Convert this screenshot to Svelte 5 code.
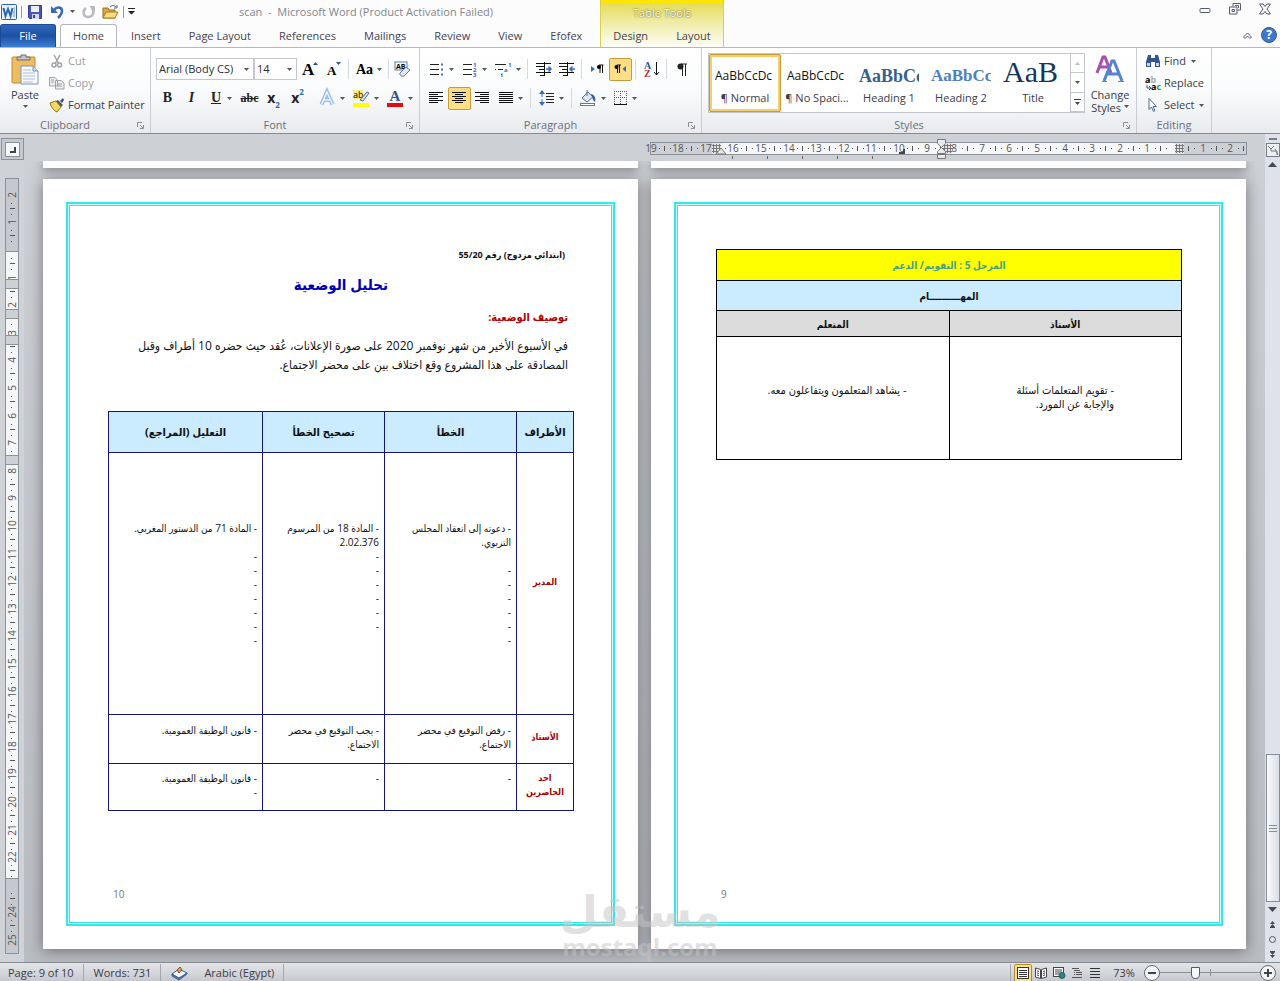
<script lang="ts">
let fontName: string = 'Arial (Body CS)';
let fontSize: string = '14';
let zoom: number = 34;

const tabs = ['Insert', 'Page Layout', 'References', 'Mailings', 'Review', 'View', 'Efofex'];

const styles = [
    { sample: 'AaBbCcDc', name: '¶ Normal', kind: 'body' },
    { sample: 'AaBbCcDc', name: '¶ No Spaci...', kind: 'body' },
    { sample: 'AaBbCc', name: 'Heading 1', kind: 'h1' },
    { sample: 'AaBbCc', name: 'Heading 2', kind: 'h2' },
    { sample: 'AaB', name: 'Title', kind: 'title' }
];

// one centimetre on the rulers at the current zoom
const CM = 27.6;

const hMarks = [];
for (let n = 19; n >= -2; n--) {
    const x = Math.round(525 - n * CM);
    hMarks.push({ x, label: n === 0 ? '' : String(Math.abs(n)) });
}

const vMarks = [];
for (let n = -2; n <= 25; n++) {
    const y = Math.round(72 + n * CM);
    vMarks.push({ y, label: n === 0 || n === 23 ? '' : String(Math.abs(n)) });
}

const rows = [
    {
        who: 'المدير',
        kind: 'tall',
        cells: [
            ['- دعوته إلى انعقاد المجلس', 'التربوي.', '', '-', '-', '-', '-', '-', '-'],
            ['- المادة 18 من المرسوم', '2.02.376', '-', '-', '-', '-', '-', '-'],
            ['- المادة 71 من الدستور المغربي.', '', '-', '-', '-', '-', '-', '-', '-']
        ]
    },
    {
        who: 'الأستاذ',
        kind: 'mid',
        cells: [
            ['- رفض التوقيع في محضر', 'الاجتماع.'],
            ['- يجب التوقيع في محضر', 'الاجتماع.'],
            ['- قانون الوظيفة العمومية.']
        ]
    },
    {
        who: 'احد الحاضرين',
        kind: 'low',
        cells: [['-'], ['-'], ['- قانون الوظيفة العمومية.', '-']]
    }
];
</script>

{#snippet caret()}
    <svg class="caret" width="5" height="3" viewBox="0 0 5 3"><path d="M0 0h5L2.500 3z" fill="#555"/></svg>
{/snippet}

{#snippet lines(list)}
    <svg width="15" height="14" viewBox="0 0 15 14">
        {#each list as [x, w], i}
            <rect {x} y={1 + i * 2} width={w} height="1" fill="#111"/>
        {/each}
    </svg>
{/snippet}

{#snippet launcher()}
    <button class="launcher" aria-label="More options">
        <svg width="7" height="7" viewBox="0 0 7 7" fill="none" stroke="#8a8f96"><path d="M.5 5V.5H5M3 3l3 3M6.5 3v3.500H3"/></svg>
    </button>
{/snippet}

<div class="app">
    <header>
        <div class="head-left">
            <div class="title-row">
                <svg class="logo" width="16" height="16" viewBox="0 0 16 16">
                    <rect x=".5" y=".5" width="15" height="15" rx="1" fill="#e9f2fb" stroke="#2c5f9e"/>
                    <path d="M2.500 4l2 8L7 5l2.500 7 2-8" fill="none" stroke="#2b66b1" stroke-width="2"/>
                    <path d="M13 4h1M13 6h1M12 8h2M12 10h2M12 12h2" stroke="#5b8dc8"/>
                </svg>
                <span class="bar"></span>
                <button class="quick" aria-label="Save">
                    <svg width="14" height="14" viewBox="0 0 14 14"><path d="M.5.5h13v13h-12l-1-1z" fill="#4a55b8" stroke="#333c96"/><path d="M3 1h8v6H3z" fill="#edf0fb"/><path d="M4 9h7v5H4z" fill="#d4d8ef"/><path d="M5 10h2v3H5z" fill="#333c96"/></svg>
                </button>
                <button class="quick" aria-label="Undo">
                    <svg width="13" height="14" viewBox="0 0 13 14"><path d="M3 5c3-4 8-3 8 1 0 3-2 5-4 7" fill="none" stroke="#3668b8" stroke-width="2.500"/><path d="M0 1v7h7z" fill="#3668b8"/></svg>
                </button>
                {@render caret()}
                <button class="quick" aria-label="Redo">
                    <svg width="13" height="14" viewBox="0 0 13 14"><path d="M4 3c-4 3-3 9 2 9 5 0 7-5 4-9" fill="none" stroke="#b9bbbf" stroke-width="2.500"/><path d="M7 1h6v6z" fill="#b9bbbf"/></svg>
                </button>
                <button class="quick" aria-label="Open">
                    <svg width="17" height="15" viewBox="0 0 17 15"><path d="M1 14V4h5l1 2h6v8z" fill="#e0a83c" stroke="#9a6d18"/><path d="M1 14l3-6h12l-3 6z" fill="#f9dc82" stroke="#a87a20"/><path d="M8 3c2-2 4-2 6 0m1-2v3h-3" fill="none" stroke="#3c5f8f"/></svg>
                </button>
                <span class="bar"></span>
                <svg width="7" height="7" viewBox="0 0 7 7"><path d="M0 0h7v1H0zM0 3h7L3.500 6.500z" fill="#222"/></svg>
                <span class="doc-title">scan&nbsp; -&nbsp; Microsoft Word (Product Activation Failed)</span>
            </div>
            <nav class="tabs">
                <button class="file">File</button>
                <button class="tab active">Home</button>
                {#each tabs as tab}
                    <button class="tab">{tab}</button>
                {/each}
            </nav>
        </div>
        <div class="context">
            <span class="context-title">Table Tools</span>
            <div class="context-tabs">
                <button class="tab">Design</button>
                <button class="tab">Layout</button>
            </div>
        </div>
        <div class="head-right">
            <div class="window-buttons">
                <button aria-label="Minimize"><svg width="12" height="12" viewBox="0 0 12 12" fill="none" stroke="#555b6e"><rect x="1" y="5.500" width="10" height="4" rx="1"/></svg></button>
                <button aria-label="Restore"><svg width="12" height="12" viewBox="0 0 12 12" fill="none" stroke="#555b6e"><path d="M4 3.500V.5h7.500V7H8.500M.5 4h7.500v7H.5zM3 6.500h2.500v2H3zM6 2.500h3.500V5"/></svg></button>
                <button aria-label="Close"><svg width="12" height="12" viewBox="0 0 12 12" fill="none" stroke="#555b6e"><path d="M.5 1h3.500l2 2.500L8 1h3.500L8 6l3.500 5H8L6 8.500 4 11H.5L4 6z"/></svg></button>
            </div>
            <div class="help-buttons">
                <button aria-label="Minimize the Ribbon"><svg width="9" height="7" viewBox="0 0 9 7" fill="none" stroke="#555b6e"><path d="M.5 5l4-4 4 4-1.500 1.500L4.500 4 2 6.500z"/></svg></button>
                <button aria-label="Help"><svg width="16" height="16" viewBox="0 0 16 16"><circle cx="8" cy="8" r="7.500" fill="#3f78c9" stroke="#2b5a9f"/><text x="8" y="12" text-anchor="middle" class="help-mark">?</text></svg></button>
            </div>
        </div>
    </header>

    <div class="ribbon">
        <section class="group clipboard">
            <div class="group-body">
                <button class="paste">
                    <svg width="28" height="31" viewBox="0 0 28 31"><rect x="1" y="3" width="23" height="26" rx="1" fill="#eebc61" stroke="#bd8a35"/><path d="M6 6V3h4V1h5v2h4v3z" fill="#bfc3c8" stroke="#6b6f75"/><path d="M10 12h12l5 5v13H10z" fill="#f9fbff" stroke="#7d93b5"/><path d="M22 12v5h5" fill="#cddcf0" stroke="#7d93b5"/><path d="M12 16h8M12 19h12M12 22h12M12 25h12M12 28h10" stroke="#a9bbd6"/></svg>
                    <span>Paste</span>
                    {@render caret()}
                </button>
                <div class="stack">
                    <button class="text-tool off">
                        <svg width="16" height="14" viewBox="0 0 16 14" fill="none" stroke="#a0a2a6" stroke-width="1.500"><path d="M5 1l4.500 8M11 1L6.500 9"/><circle cx="5" cy="11" r="2"/><circle cx="10.500" cy="11" r="2"/></svg>
                        Cut
                    </button>
                    <button class="text-tool off">
                        <svg width="16" height="14" viewBox="0 0 16 14" fill="#eee" stroke="#a0a2a6"><path d="M.5 1.500H6L8.500 4v6h-8zM6.500 4.500H12L15 7v6H6.500z"/><path d="M2 4h3M2 6h3M8 8h5M8 10h5"/></svg>
                        Copy
                    </button>
                    <button class="text-tool">
                        <svg width="16" height="14" viewBox="0 0 16 14"><path d="M1 5l6-2 5 6-4 5c-3-1-6-5-7-9z" fill="#f1d95a" stroke="#8f7a1d"/><path d="M7 3l2-1 5 5-2 2z" fill="#555a63"/><path d="M11 3l3-3 1 2-2 3z" fill="#35508f"/></svg>
                        Format Painter
                    </button>
                </div>
            </div>
            <footer><span>Clipboard</span>{@render launcher()}</footer>
        </section>

        <section class="group font">
            <div class="group-body rows">
                <div class="tools">
                    <div class="combos">
                        <label class="combo name">
                            <select bind:value={fontName} aria-label="Font"><option>Arial (Body CS)</option><option>Tahoma</option></select>
                            {@render caret()}
                        </label>
                        <label class="combo size">
                            <select bind:value={fontSize} aria-label="Font size"><option>12</option><option>14</option><option>16</option></select>
                            {@render caret()}
                        </label>
                    </div>
                    <button class="tool" aria-label="Grow font"><svg width="16" height="16" viewBox="0 0 16 16"><text x="0" y="14" class="serif" font-size="17">A</text><path d="M11 4h5l-2.500-3z" fill="#34557f"/></svg></button>
                    <button class="tool" aria-label="Shrink font"><svg width="16" height="16" viewBox="0 0 16 16"><text x="1" y="14" class="serif" font-size="13">A</text><path d="M10 1h5l-2.500 3z" fill="#34557f"/></svg></button>
                    <span class="sep"></span>
                    <button class="tool split" aria-label="Change case"><svg width="18" height="16" viewBox="0 0 18 16"><text x="1" y="13" class="serif" font-size="14">Aa</text></svg>{@render caret()}</button>
                    <span class="sep"></span>
                    <button class="tool" aria-label="Clear formatting"><svg width="17" height="16" viewBox="0 0 17 16"><rect x="1" y="1" width="12" height="8" fill="#fff" stroke="#5a7ba8"/><text x="2" y="8" font-size="7" font-weight="700">AB</text><path d="M6 12l6-6 4 3-6 6c-2 1-5-1-4-3z" fill="#dfe6f2" stroke="#63779b"/></svg></button>
                </div>
                <div class="tools">
                    <button class="tool b">B</button>
                    <button class="tool i">I</button>
                    <button class="tool split u"><span>U</span>{@render caret()}</button>
                    <button class="tool strike">abc</button>
                    <button class="tool x">x<sub>2</sub></button>
                    <button class="tool x">x<sup>2</sup></button>
                    <span class="sep"></span>
                    <button class="tool split" aria-label="Text effects"><svg width="17" height="17" viewBox="0 0 17 17"><path d="M2.500 14.500L8 2l5.500 12.500M5 10h6" fill="none" stroke="#8fbbe8" stroke-width="4"/><path d="M2.500 14.500L8 2l5.500 12.500M5 10h6" fill="none" stroke="#eef6ff" stroke-width="1.500"/></svg>{@render caret()}</button>
                    <button class="tool split" aria-label="Highlight"><svg width="17" height="17" viewBox="0 0 17 17"><rect width="10" height="9" fill="#f4ee7c"/><text x="0" y="8" font-size="9">ab</text><path d="M7 10l7-8 2 1-6 8z" fill="#dde6f2" stroke="#4f678d"/><rect y="13" width="16" height="4" fill="#ff0"/></svg>{@render caret()}</button>
                    <button class="tool split" aria-label="Font color"><svg width="17" height="17" viewBox="0 0 17 17"><text x="8" y="11" text-anchor="middle" class="serif blue" font-size="15">A</text><rect y="13" width="16" height="4" fill="#e30b0b"/></svg>{@render caret()}</button>
                </div>
            </div>
            <footer><span>Font</span>{@render launcher()}</footer>
        </section>

        <section class="group paragraph">
            <div class="group-body rows">
                <div class="tools">
                    <button class="tool split" aria-label="Bullets"><svg width="15" height="14" viewBox="0 0 15 14"><path d="M0 2.500h9M0 7.500h9M0 12.500h9" stroke="#222"/><path d="M11 1.500h2v2h-2zM11 6.500h2v2h-2zM11 11.500h2v2h-2z" fill="#4a6ea9"/></svg>{@render caret()}</button>
                    <button class="tool split" aria-label="Numbering"><svg width="15" height="15" viewBox="0 0 15 15"><path d="M0 2.500h9M0 7.500h9M0 12.500h9" stroke="#222"/><g class="tiny"><text x="10" y="5">1</text><text x="10" y="10">2</text><text x="10" y="15">3</text></g></svg>{@render caret()}</button>
                    <button class="tool split" aria-label="Multilevel list"><svg width="17" height="15" viewBox="0 0 17 15"><path d="M0 2.500h11M3 7.500h5M6 12.500h1M0 7.500h1" stroke="#222"/><g class="tiny"><text x="13" y="5">1</text><text x="9" y="10">a</text><text x="6" y="15">i</text></g></svg>{@render caret()}</button>
                    <span class="sep"></span>
                    <button class="tool" aria-label="Decrease indent"><svg width="16" height="14" viewBox="0 0 16 14"><path d="M0 1.500h15M0 4.500h8M3 7.500h5M0 10.500h15M4 13.500h4M8.500 0v14" stroke="#111"/><path d="M10 7h5M12.500 4.500L15 7l-2.500 2.500" fill="none" stroke="#3668b8" stroke-width="1.500"/></svg></button>
                    <button class="tool" aria-label="Increase indent"><svg width="16" height="14" viewBox="0 0 16 14"><path d="M0 1.500h15M0 4.500h8M3 7.500h5M0 10.500h15M4 13.500h4M8.500 0v14" stroke="#111"/><path d="M16 7h-5M13.500 4.500L11 7l2.500 2.500" fill="none" stroke="#3668b8" stroke-width="1.500"/></svg></button>
                    <span class="sep"></span>
                    <button class="tool" aria-label="Left to right"><svg width="13" height="12" viewBox="0 0 13 12"><path d="M0 3l4 3-4 3z" fill="#3668b8"/><path d="M12.500 2H8M9 2v8M11.500 2v8" fill="none" stroke="#111"/><circle cx="8" cy="4" r="2"/></svg></button>
                    <button class="tool on" aria-label="Right to left"><svg width="13" height="12" viewBox="0 0 13 12"><path d="M12 3L8.500 6 12 9z" fill="#3668b8"/><path d="M7 2H3M5.500 2v8M3.500 2v8" fill="none" stroke="#111"/><circle cx="2.500" cy="4" r="2"/></svg></button>
                    <span class="sep"></span>
                    <button class="tool" aria-label="Sort"><svg width="16" height="16" viewBox="0 0 16 16"><text x="0" y="8" class="serif blue" font-size="10">A</text><text x="0" y="16" class="serif red" font-size="10">Z</text><path d="M12.500 1v13M10 11l2.500 3 2.500-3" fill="none" stroke="#111"/></svg></button>
                    <span class="sep"></span>
                    <button class="tool" aria-label="Show marks"><svg width="11" height="13" viewBox="0 0 11 13"><path d="M4 1h6M5.500 1v12M8.500 1v12" stroke="#222" fill="none"/><circle cx="3.500" cy="3.500" r="3" fill="#222"/></svg></button>
                </div>
                <div class="tools">
                    <button class="tool" aria-label="Align left">{@render lines([[0, 14], [0, 9], [0, 14], [0, 9], [0, 14], [0, 9]])}</button>
                    <button class="tool on" aria-label="Center">{@render lines([[0, 14], [3, 8], [0, 14], [3, 8], [0, 14], [3, 8]])}</button>
                    <button class="tool" aria-label="Align right">{@render lines([[0, 14], [5, 9], [0, 14], [5, 9], [0, 14], [5, 9]])}</button>
                    <button class="tool split" aria-label="Justify">{@render lines([[0, 14], [0, 14], [0, 14], [0, 14], [0, 14], [0, 14]])}{@render caret()}</button>
                    <span class="sep"></span>
                    <button class="tool split" aria-label="Line spacing"><svg width="16" height="16" viewBox="0 0 16 16"><path d="M7 3.500h8M7 6.500h8M7 9.500h8M7 12.500h8" stroke="#222"/><path d="M3 2v12" stroke="#3668b8" stroke-dasharray="5 2"/><path d="M0 4l3-4 3 4zM0 12l3 4 3-4z" fill="#3668b8"/></svg>{@render caret()}</button>
                    <span class="sep"></span>
                    <button class="tool split" aria-label="Shading"><svg width="17" height="16" viewBox="0 0 17 16"><path d="M2 8l6-6 5 5-6 5z" fill="#dfe8f4" stroke="#4b6a99"/><path d="M7 0v6" stroke="#4b6a99"/><path d="M11 4c4 1 5 4 4 8-2-1-2-3-3-5z" fill="#35609f"/><rect x=".5" y="13.500" width="14" height="2" fill="#fff" stroke="#777"/></svg>{@render caret()}</button>
                    <button class="tool split" aria-label="Borders"><svg width="14" height="14" viewBox="0 0 14 14"><path d="M.5 0v13M6.500 0v13M12.500 0v13M0 .5h13M0 6.500h13" stroke="#555" stroke-dasharray="1 1"/><path d="M0 13.500h13" stroke="#111"/></svg>{@render caret()}</button>
                </div>
            </div>
            <footer><span>Paragraph</span>{@render launcher()}</footer>
        </section>

        <section class="group styles">
            <div class="group-body">
                <div class="gallery">
                    {#each styles as style, i}
                        <button class="style" class:chosen={i === 0}>
                            <span class="sample {style.kind}">{style.sample}</span>
                            <span class="style-name">{style.name}</span>
                        </button>
                    {/each}
                    <div class="gallery-scroll">
                        <button class="off" aria-label="Up"><svg width="5" height="3" viewBox="0 0 5 3"><path d="M0 3h5L2.500 0z" fill="#b8bbc0"/></svg></button>
                        <button aria-label="Down">{@render caret()}</button>
                        <button aria-label="More"><svg width="7" height="6" viewBox="0 0 7 6"><path d="M0 0h7v1H0zM1 3h5L3.500 6z" fill="#444"/></svg></button>
                    </div>
                </div>
                <button class="change">
                    <svg width="30" height="30" viewBox="0 0 30 30" fill="none"><path d="M2 19L8 3h2l6 16M5 13h9" stroke="#a94fb0" stroke-width="3"/><path d="M9 27l8-20h2l8 20M13 20h11" stroke="#5284cf" stroke-width="3"/><path d="M7 27.500h5M23 27.500h6" stroke="#5284cf"/></svg>
                    <span>Change</span>
                    <span>Styles {@render caret()}</span>
                </button>
            </div>
            <footer><span>Styles</span>{@render launcher()}</footer>
        </section>

        <section class="group editing">
            <div class="group-body">
                <div class="stack">
                    <button class="text-tool">
                        <svg width="16" height="14" viewBox="0 0 16 14"><path d="M3 1h3v3h4V1h3l2 7v5h-5V8H6v5H1V8z" fill="#31548f"/><path d="M2 9h3v3H2zM11 9h3v3h-3z" fill="#c4d6f0"/></svg>
                        Find {@render caret()}
                    </button>
                    <button class="text-tool">
                        <svg width="16" height="15" viewBox="0 0 16 15"><text x="0" y="7" font-size="9" font-weight="700">a<tspan fill="#aaa">b</tspan></text><text x="6" y="14" font-size="9" font-weight="700">a<tspan fill="#1a9a2a">c</tspan></text><path d="M2 9v3h3M4 10l2 2-2 2" fill="none" stroke="#35508f"/></svg>
                        Replace
                    </button>
                    <button class="text-tool">
                        <svg width="16" height="14" viewBox="0 0 16 14"><path d="M4 .5v11l2.500-2.500 2 4.500 1.500-1-2-4h3.500z" fill="#fff" stroke="#51698f"/></svg>
                        Select {@render caret()}
                    </button>
                </div>
            </div>
            <footer><span>Editing</span></footer>
        </section>
    </div>

    <main>
        <aside class="left-rail">
            <button class="tab-kind" aria-label="Tab stop"><svg width="15" height="15" viewBox="0 0 15 15"><rect x=".5" y=".5" width="14" height="14" fill="#f7f8f9" stroke="#8d9198"/><path d="M10 5v5H5" fill="none" stroke="#444" stroke-width="2"/></svg></button>
            <svg class="v-ruler" width="15" height="776" viewBox="0 0 15 776">
                <rect x=".5" y=".5" width="13" height="775" fill="#c5c8ce" stroke="#8d9198"/>
                <rect x="1" y="74" width="12" height="626" fill="#f5f6f8"/>
                {#each vMarks as mark}
                    <text transform="translate(11 {mark.y}) rotate(-90)" text-anchor="middle">{mark.label}</text>
                    {#if mark.y < 750}
                        <path d="M6 {mark.y + 8.5}h1M5 {mark.y + 13.5}h5M6 {mark.y + 19.5}h1" stroke="#555"/>
                    {/if}
                {/each}
                {#each [101, 131, 157, 277] as y}
                    <rect x=".5" y={y + .5} width="13" height="9" fill="#cdd0d5" stroke="#8d9198"/>
                {/each}
                <path d="M1 73.500h12M1 700.500h12" stroke="#8d9198"/>
            </svg>
        </aside>

        <div class="canvas">
            <div class="spread ruler-row">
                <svg class="h-ruler" width="597" height="20" viewBox="0 0 597 20">
                    <rect x=".5" y="3.500" width="596" height="12" fill="#cdd0d5" stroke="#8d9198"/>
                    <rect x="69" y="4" width="456" height="11" fill="#f5f6f8"/>
                    {#each hMarks as mark}
                        <text x={mark.x} y="13" text-anchor="middle">{mark.label}</text>
                        <path d="M{mark.x + 8} 9.500h1M{mark.x + 13.5} 7v5" stroke="#555"/>
                        {#if mark.x < 575}
                            <path d="M{mark.x + 19} 9.500h1" stroke="#555"/>
                        {/if}
                    {/each}
                    {#each [62, 293, 525] as x}
                        <rect {x} y="4" width="9" height="11" fill="#e3e5e8"/>
                        <path d="M{x} 6.500h9M{x} 9.500h9M{x} 12.500h9M{x + 1.5} 5v9M{x + 4.5} 5v9M{x + 7.5} 5v9" stroke="#777"/>
                    {/each}
                    <path d="M66 15l5-6 5 6z" fill="#e3e5e8" stroke="#777"/>
                    <path d="M287.500.5h8v4l-4 4-4-4zM287.500 14.500v-2l4-4 4 4v2zM287.500 15.500h8v4h-8z" fill="#e9eaed" stroke="#777"/>
                    <path d="M249 14h5v-4" fill="none" stroke="#444" stroke-width="2"/>
                    <path d="M82.500 17v3M117.500 17v3M152.500 17v3M187.500 17v3M222.500 17v3" stroke="#666"/>
                </svg>
            </div>
            <div class="desk">
                <div class="spread"><div class="page-end"></div><div class="page-end"></div></div>
                <div class="spread">
                    <article class="page" lang="ar">
                        <div class="frame" dir="rtl">
                            <p class="ref-line">(ابتدائي مزدوج) رقم 55/20</p>
                            <h1>تحليل الوضعية</h1>
                            <h2>توصيف الوضعية:</h2>
                            <p class="intro">في الأسبوع الأخير من شهر نوفمبر 2020 على صورة الإعلانات، عُقد حيث حضره 10 أطراف وقبل<br>المصادقة على هذا المشروع وقع اختلاف بين على محضر الاجتماع.</p>
                            <table class="analysis">
                                <thead>
                                    <tr><th class="c1">الأطراف</th><th class="c2">الخطأ</th><th class="c3">تصحيح الخطأ</th><th>التعليل (المراجع)</th></tr>
                                </thead>
                                <tbody>
                                    {#each rows as row}
                                        <tr class={row.kind}>
                                            <th>{row.who}</th>
                                            {#each row.cells as cell}
                                                <td>
                                                    {#each cell as line}
                                                        <div class="line">{line}</div>
                                                    {/each}
                                                </td>
                                            {/each}
                                        </tr>
                                    {/each}
                                </tbody>
                            </table>
                            <span class="page-number">10</span>
                        </div>
                    </article>
                    <article class="page" lang="ar">
                        <div class="frame second" dir="rtl">
                            <table class="tasks">
                                <tbody>
                                    <tr class="phase"><th colspan="2">المرحل 5 : التقويم/ الدعم</th></tr>
                                    <tr class="duty"><th colspan="2">المهــــــــــام</th></tr>
                                    <tr class="roles"><th>الأستاذ</th><th>المتعلم</th></tr>
                                    <tr class="content">
                                        <td class="wide-pad"><div class="line">- تقويم المتعلمات أسئلة</div><div class="line">والإجابة عن المورد.</div></td>
                                        <td><div class="line">- يشاهد المتعلمون ويتفاعلون معه.</div></td>
                                    </tr>
                                </tbody>
                            </table>
                            <span class="page-number">9</span>
                        </div>
                    </article>
                </div>
                <div class="watermark">
                    <span class="mark-ar">مستقل</span>
                    <span class="mark-en">mostaql.com</span>
                </div>
            </div>
        </div>

        <aside class="scrollbar">
            <span class="split-box"></span>
            <button aria-label="View ruler"><svg width="14" height="14" viewBox="0 0 14 14" fill="none" stroke="#777c85"><rect x=".5" y=".5" width="13" height="13" fill="#eceef1"/><path d="M2 3l3 3 3-3M5 6v2h6v4M9 6l3 6"/></svg></button>
            <button aria-label="Scroll up"><svg width="9" height="5" viewBox="0 0 9 5"><path d="M0 5h9L4.500 0z" fill="#444a55"/></svg></button>
            <div class="track"><div class="thumb"><i></i><i></i><i></i></div></div>
            <button aria-label="Scroll down"><svg width="9" height="5" viewBox="0 0 9 5"><path d="M0 0h9L4.500 5z" fill="#444a55"/></svg></button>
            <button aria-label="Previous page"><svg width="5" height="7" viewBox="0 0 5 7"><path d="M0 3h5L2.500 0zM0 6h5L2.500 3zM0 6h5v1H0z" fill="#444a55"/></svg></button>
            <button aria-label="Browse object"><svg width="7" height="7" viewBox="0 0 7 7"><circle cx="3.500" cy="3.500" r="3" fill="none" stroke="#555b66"/></svg></button>
            <button aria-label="Next page"><svg width="5" height="7" viewBox="0 0 5 7"><path d="M0 1h5L2.500 4zM0 4h5L2.500 7zM0 0h5v1H0z" fill="#444a55"/></svg></button>
        </aside>
    </main>

    <div class="status">
        <button class="cell">Page: 9 of 10</button>
        <button class="cell">Words: 731</button>
        <button class="cell proof">
            <svg width="17" height="14" viewBox="0 0 17 14"><path d="M1 8l7-5 8 4-8 6z" fill="#f6f7fa" stroke="#3f5f97"/><path d="M1 8v2l7 4 8-6V7l-8 5z" fill="#5279b8" stroke="#3f5f97"/><path d="M6 4l3-3 2 3-3 3z" fill="#e2a04a" stroke="#8c4b2c"/></svg>
            <span>Arabic (Egypt)</span>
        </button>
        <div class="views">
            <button class="view on" aria-label="Print layout"><svg width="12" height="12" viewBox="0 0 12 12"><rect x=".5" y=".5" width="11" height="11" fill="#fff" stroke="#333"/><path d="M2 3.500h8M2 5.500h8M2 7.500h8M2 9.500h8" stroke="#333"/></svg></button>
            <button class="view" aria-label="Full screen reading"><svg width="12" height="12" viewBox="0 0 12 12" fill="#fff" stroke="#444"><path d="M.5 1l5 1.500v9l-5-1.500zM11.500 1l-5 1.500v9l5-1.500zM2 4l2 .5M2 6l2 .5M2 8l2 .5M10 4l-2 .5M10 6l-2 .5M10 8l-2 .5"/></svg></button>
            <button class="view" aria-label="Web layout"><svg width="13" height="12" viewBox="0 0 13 12"><rect x=".5" y=".5" width="10" height="9" fill="#fff" stroke="#444"/><path d="M2 3h7M2 5h7M2 7h4" stroke="#444"/><circle cx="9" cy="8.500" r="3" fill="#2e7f9d" stroke="#265"/></svg></button>
            <button class="view" aria-label="Outline"><svg width="10" height="10" viewBox="0 0 10 10"><path d="M0 .5h7M2 2.500h6M2 4.500h1M4 4.500h6M2 6.500h1M4 6.500h6M0 9.500h10" stroke="#555"/></svg></button>
            <button class="view" aria-label="Draft"><svg width="10" height="10" viewBox="0 0 10 10"><path d="M0 .5h10M0 3.500h10M0 6.500h10M0 9.500h10" stroke="#333"/></svg></button>
        </div>
        <button class="percent">73%</button>
        <button class="round" aria-label="Zoom out"><svg width="16" height="16" viewBox="0 0 16 16"><circle cx="8" cy="8" r="7.500" fill="#f3f4f6" stroke="#666b73"/><path d="M4 8h8" stroke="#444" stroke-width="2"/></svg></button>
        <input class="zoom" type="range" min="0" max="100" bind:value={zoom} aria-label="Zoom">
        <button class="round" aria-label="Zoom in"><svg width="16" height="16" viewBox="0 0 16 16"><circle cx="8" cy="8" r="7.500" fill="#f3f4f6" stroke="#666b73"/><path d="M4 8h8M8 4v8" stroke="#444" stroke-width="2"/></svg></button>
    </div>
</div>

<style>
:global(body) {
    margin: 0;
}

.app {
    min-height: 100vh;
    display: flex;
    flex-direction: column;
    font-family: "Open Sans", "DejaVu Sans", sans-serif;
    font-size: 11px;
    line-height: 14px;
    color: #3b3b4a;
    background: #fcfcfc;
}

.app * {
    box-sizing: border-box;
}

button {
    display: flex;
    align-items: center;
    justify-content: center;
    padding: 0;
    border: none;
    background: none;
    font: inherit;
    color: inherit;
    white-space: nowrap;
}

svg {
    display: block;
    flex: none;
    overflow: visible;
}

/* title bar and tabs */

header {
    display: flex;
    height: 48px;
    border-bottom: 1px solid #b4b8be;
}

.head-left {
    width: 600px;
    display: flex;
    flex-direction: column;
}

.title-row {
    height: 24px;
    display: flex;
    align-items: center;
    gap: 4px;
    padding-left: 1px;
}

.bar {
    width: 1px;
    height: 12px;
    background: #999;
}

.quick {
    width: 18px;
}

.doc-title {
    flex: 1;
    padding-left: 100px;
    color: #85858c;
}

.tabs {
    height: 24px;
    display: flex;
}

.file {
    width: 56px;
    margin-right: 4px;
    padding-top: 1px;
    border: 1px solid #1c4a94;
    border-bottom: none;
    border-radius: 3px 3px 0 0;
    background: linear-gradient(#2f69bd, #1e50a2 50%, #3a7fd5);
    color: #fff;
}

.tab {
    padding: 2px 14px 0;
    color: #444250;
}

.tab.active {
    width: 57px;
    padding: 1px 0 0;
    border: 1px solid #b4b8be;
    border-bottom: none;
    border-radius: 3px 3px 0 0;
    background: #fff;
}

.context {
    width: 124px;
    display: flex;
    flex-direction: column;
    border: solid #d8cf4a;
    border-width: 0 1px;
    background: linear-gradient(#ffe600 0, #ffe600 3px, #e6dd5c 4px, #f1edab 24px, #fcfcf4 46px);
}

.context-title {
    height: 24px;
    padding-top: 6px;
    text-align: center;
    color: #fff;
    text-shadow: 0 0 2px #6a6420, 0 0 1px #8a8430;
}

.context-tabs {
    height: 23px;
    display: flex;
    justify-content: center;
}

.context-tabs .tab {
    padding-top: 1px;
}

.head-right {
    flex: 1;
    display: flex;
    flex-direction: column;
    align-items: flex-end;
}

.window-buttons {
    height: 24px;
    display: flex;
    align-items: center;
    gap: 18px;
    padding: 0 9px 6px 0;
}

.help-buttons {
    height: 22px;
    display: flex;
    align-items: center;
    gap: 9px;
    padding-right: 3px;
}

.help-mark {
    font-size: 12px;
    font-weight: 700;
    fill: #fff;
}

/* ribbon */

.ribbon {
    height: 86px;
    display: flex;
    border-bottom: 1px solid #868b92;
    background: linear-gradient(#fff, #fafbfc 50%, #e8eaee);
}

.group {
    display: flex;
    flex-direction: column;
    border-right: 1px solid #c9ccd2;
}

.group-body {
    flex: 1;
    display: flex;
    padding: 2px 5px 0;
}

.rows {
    flex-direction: column;
    padding-top: 9px;
    gap: 5px;
}

footer {
    height: 16px;
    display: flex;
    align-items: center;
    padding-right: 5px;
    color: #6c6f7c;
}

footer span {
    flex: 1;
    text-align: center;
}

.clipboard { width: 151px; }
.font { width: 269px; }
.paragraph { width: 282px; }
.styles { width: 435px; }
.editing { width: 75px; }

.editing footer {
    padding-left: 5px;
}

.paste {
    width: 40px;
    flex-direction: column;
    justify-content: flex-start;
    padding-top: 4px;
    gap: 3px;
}

.stack {
    display: flex;
    flex-direction: column;
    padding-left: 4px;
}

.text-tool {
    height: 22px;
    justify-content: flex-start;
    gap: 3px;
}

.text-tool .caret {
    margin-left: 2px;
}

.editing .stack {
    padding-left: 3px;
}

.text-tool.off {
    color: #9d9da3;
}

.tools {
    height: 24px;
    display: flex;
    align-items: center;
}

.font .tools {
    gap: 1px;
}

.combos {
    display: flex;
}

.combo {
    height: 22px;
    display: grid;
    align-items: center;
    border: 1px solid #c3c6cc;
    background: #fff;
}

.combo select {
    grid-area: 1 / 1;
    width: 100%;
    padding: 0 0 0 2px;
    border: none;
    appearance: none;
    background: none;
    font: inherit;
    color: #2d2d36;
}

.combo .caret {
    grid-area: 1 / 1;
    justify-self: end;
    margin-right: 4px;
}

.combo.name { width: 98px; }
.combo.size { width: 43px; }

.tool {
    width: 23px;
    height: 23px;
    flex: none;
    color: #222;
}

.tool.split {
    width: 33px;
    gap: 4px;
}

.tool.on {
    border: 1px solid #c79a3d;
    border-radius: 2px;
    background: linear-gradient(#fbdc82, #ffe08a);
}

.sep {
    width: 1px;
    height: 20px;
    margin: 0 2px;
    background: #d5d8dc;
}

.paragraph .sep {
    margin: 0 4px 0 3px;
}

.b, .i, .u, .x, .strike {
    font-size: 14px;
    font-weight: 700;
    font-family: "Liberation Serif", serif;
}

.i { font-style: italic; }
.u span { width: 13px; text-decoration: underline; }
.x { font-family: "Open Sans", sans-serif; }
.x sub, .x sup { font-size: 8px; line-height: 10px; color: #3668b8; }
.x sub { align-self: flex-end; }
.x sup { align-self: flex-start; }
.strike { font-size: 12px; text-decoration: line-through; }

.serif {
    font-family: "Liberation Serif", serif;
    font-weight: 700;
}

.blue { fill: #34558f; }
.red { fill: #a33; }
.tiny { font-size: 6px; font-weight: 700; fill: #3668b8; }

.launcher {
    width: 9px;
    margin-left: 6px;
}

/* style gallery */

.gallery {
    width: 377px;
    height: 60px;
    display: flex;
    margin: 3px 0 0 1px;
    border: 1px solid #c3c6cc;
    background: #fff;
}

.style {
    width: 72px;
    flex-direction: column;
    justify-content: flex-start;
    padding: 9px 6px 0;
}

.style.chosen {
    border: 3px solid #f3cf6b;
    border-radius: 2px;
    outline: 1px solid #c79a3d;
    outline-offset: -1px;
    padding: 6px 3px 0;
}

.sample {
    width: 100%;
    height: 26px;
    overflow: hidden;
    line-height: 26px;
    font-size: 12px;
    color: #111;
    text-align: left;
}

.style-name {
    padding-top: 2px;
}

.sample.h1, .sample.h2, .sample.title {
    font-family: "Liberation Serif", serif;
    font-weight: 700;
    font-size: 18px;
    color: #365f91;
}

.sample.h2 {
    font-size: 17px;
    color: #4f81bd;
}

.sample.title {
    font-size: 30px;
    line-height: 18px;
    font-weight: 400;
    color: #17365d;
}

.gallery-scroll {
    width: 14px;
    margin-left: auto;
    display: flex;
    flex-direction: column;
    border-left: 1px solid #c3c6cc;
}

.gallery-scroll button {
    flex: 1;
    border-bottom: 1px solid #c3c6cc;
}

.change {
    flex: 1;
    flex-direction: column;
    justify-content: flex-start;
    padding: 4px 0 0 4px;
    line-height: 13px;
}

.change svg:first-child {
    margin-bottom: 4px;
}

.change .caret {
    display: inline-block;
    margin-bottom: 2px;
}

/* work area */

main {
    flex: 1;
    display: flex;
    background: linear-gradient(#cdd0d5, #b9bcc1);
}

.left-rail {
    width: 24px;
    padding: 4px 0 0 1px;
    background: #cfd2d7;
}

.tab-kind {
    width: 23px;
    height: 22px;
    border: 1px solid #8d9198;
    background: #c5c8ce;
}

.v-ruler {
    margin: 18px 0 0 4px;
}

.v-ruler text, .h-ruler text {
    font-size: 10px;
    fill: #555;
}

.canvas {
    flex: 1;
    display: flex;
    flex-direction: column;
}

.spread {
    display: flex;
    justify-content: center;
    gap: 13px;
}

.ruler-row {
    height: 27px;
    align-items: center;
    padding: 2px 0 0 608px;
    background: #cdd0d5;
}

.desk {
    flex: 1;
    position: relative;
    overflow: hidden;
}

.page-end {
    width: 595px;
    height: 7px;
    margin-bottom: 11px;
    background: #fff;
    box-shadow: 0 2px 10px rgba(60, 62, 66, .6);
}

.page {
    width: 595px;
    height: 770px;
    padding: 23px;
    background: #fff;
    box-shadow: 0 2px 14px rgba(60, 62, 66, .6);
    color: #111;
    font-family: "Open Sans", "DejaVu Sans Condensed", "DejaVu Sans", sans-serif;
}

.frame {
    height: 724px;
    display: flex;
    flex-direction: column;
    padding: 40px 39px 23px 40px;
    border: 2px solid #33e8e6;
    box-shadow: inset 0 0 0 1px #d0fbfb, inset 0 0 0 2px #33e8e6;
}

.frame.second {
    padding-top: 45px;
}

.ref-line, .intro, h1, h2 {
    margin: 0;
}

.ref-line {
    padding: 4px 9px 0 0;
    font-size: 9px;
    font-weight: 700;
}

h1 {
    margin-top: 10px;
    line-height: 24px;
    text-align: center;
    font-size: 15px;
    color: #0000b4;
}

h2 {
    margin-top: 12px;
    padding-right: 6px;
    line-height: 18px;
    font-size: 11px;
    color: #b40000;
}

.intro {
    margin-top: 10px;
    padding-right: 6px;
    line-height: 19px;
    font-size: 12px;
    white-space: nowrap;
}

table {
    width: 466px;
    border-collapse: collapse;
    table-layout: fixed;
}

th, td {
    padding: 0 5px;
    border: 1px solid #000;
    text-align: center;
}

th {
    font-size: 10px;
}

td {
    text-align: right;
    vertical-align: top;
    font-size: 10px;
}

.line {
    height: 14px;
    white-space: nowrap;
}

.analysis {
    margin-top: 37px;
}

.analysis th, .analysis td {
    border-color: #14147a;
}

.analysis thead th {
    height: 41px;
    background: #cbebff;
    font-size: 11px;
}

.c1 { width: 57px; }
.c2 { width: 132px; }
.c3 { width: 122px; }

.analysis tbody th {
    padding: 0 3px 4px;
    font-size: 9px;
    color: #a80000;
}

.tall { height: 262px; }
.mid { height: 49px; }
.low { height: 47px; }
.tall td { padding-top: 68px; }
.mid td { padding-top: 8px; }
.low td { padding-top: 7px; }

.phase { height: 31px; background: #ff0; color: #45a08c; }
.duty { height: 30px; background: #cbebff; }
.roles { height: 26px; background: #dcdcdc; }
.content { height: 123px; }

.content td {
    padding: 46px 42px 0;
    font-size: 11px;
}

.content .wide-pad {
    padding-right: 67px;
}

.page-number {
    margin-top: auto;
    padding-left: 5px;
    text-align: left;
    font-size: 10px;
    color: #777;
}

.watermark {
    position: absolute;
    left: 0;
    right: 9px;
    bottom: 0;
    display: flex;
    flex-direction: column;
    align-items: center;
    font-weight: 700;
    color: #c4c4c4;
    opacity: .5;
}

.mark-ar {
    font-size: 44px;
    line-height: 44px;
}

.mark-en {
    font-size: 24px;
    line-height: 30px;
}

/* scroll bar */

.scrollbar {
    width: 15px;
    display: flex;
    flex-direction: column;
    align-items: center;
    background: #dfe2e9;
}

.scrollbar button {
    width: 15px;
    height: 15px;
}

.split-box {
    width: 8px;
    height: 2px;
    margin: 4px 0 2px;
    background: #777c85;
}

.track {
    flex: 1;
    display: flex;
    flex-direction: column;
    justify-content: flex-end;
}

.thumb {
    width: 14px;
    height: 148px;
    display: flex;
    flex-direction: column;
    align-items: center;
    justify-content: center;
    gap: 2px;
    border: 1px solid #868c99;
    background: linear-gradient(90deg, #fafbfc, #d8dce4);
}

.thumb i {
    width: 8px;
    height: 1px;
    background: #868c99;
}

/* status bar */

.status {
    height: 19px;
    display: flex;
    align-items: center;
    padding: 1px 4px 0 0;
    border-top: 1px solid #868b92;
    background: linear-gradient(#e3e5e8, #c6c9ce);
}

.cell {
    height: 18px;
    padding: 0 9px 0 8px;
    border-right: 1px solid #a4a8ae;
}

.cell + .cell {
    padding-left: 10px;
}

.proof {
    gap: 16px;
}

.views {
    height: 18px;
    display: flex;
    margin-left: auto;
    padding-left: 3px;
    border-left: 1px solid #a4a8ae;
}

.view {
    width: 18px;
}

.view.on {
    border: 1px solid #b58a2c;
    border-radius: 2px 2px 0 0;
    background: #fbdf86;
}

.percent {
    width: 40px;
}

.zoom {
    width: 100px;
    height: 16px;
    margin: 0;
    appearance: none;
    background: linear-gradient(#8d9198, #8d9198) center / 100% 1px no-repeat, linear-gradient(#8d9198, #8d9198) center / 1px 7px no-repeat;
}

.zoom::-webkit-slider-thumb {
    appearance: none;
    width: 9px;
    height: 12px;
    border: 1px solid #555b66;
    border-radius: 1px 1px 5px 5px;
    background: #f6f7f9;
}
</style>
